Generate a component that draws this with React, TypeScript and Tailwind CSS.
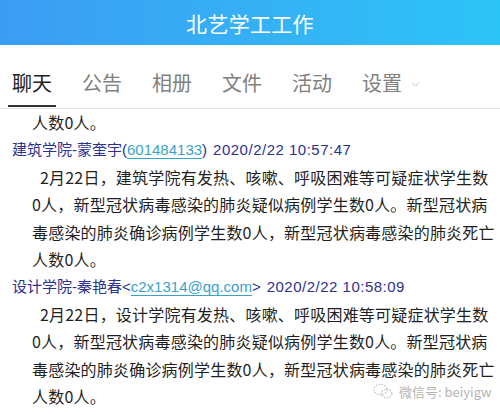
import React from "react";
import { ChevronDown } from "lucide-react";

const FONT = { fontFamily: '"Noto Sans CJK SC", "Noto Sans", sans-serif' };
const SENDER_FONT = { fontFamily: '"Liberation Sans", "Noto Sans CJK SC", sans-serif' };

function Sender({ name, open, link, close, time }: { name: string; open: string; link: string; close: string; time: string }) {
  return (
    <div className="h-[27.4px] leading-[27.4px] pl-[12px] text-[15px] whitespace-nowrap text-[#2c3190]" style={SENDER_FONT}>
      {name}
      {open}
      <span className="text-[#3aa2c8] underline underline-offset-[3px]">{link}</span>
      {close}
      <span className="ml-[6px] tracking-[0.5px]">{time}</span>
    </div>
  );
}

function Body({ lines }: { lines: string[] }) {
  return (
    <div className="text-[16px] tracking-[0.2px] text-[#1f1f1f]">
      {lines.map((l, i) => (
        <div key={i} className={`h-[27.4px] leading-[27.4px] whitespace-nowrap ${i === 0 ? "pl-[40px]" : "pl-[32px]"}`}>
          {l}
        </div>
      ))}
    </div>
  );
}

function WeChatIcon() {
  return (
    <svg width="20" height="17" viewBox="0 0 20 17" fill="none" stroke="#c4c4c4" strokeWidth="1.2" strokeDasharray="1.6 1.2">
      <ellipse cx="7.5" cy="6.5" rx="6.5" ry="5.2" />
      <ellipse cx="13.5" cy="10.5" rx="5.3" ry="4.3" />
    </svg>
  );
}

export default function App() {
  const tabs = ["聊天", "公告", "相册", "文件", "活动", "设置"];
  const body = [
    "2月22日，建筑学院有发热、咳嗽、呼吸困难等可疑症状学生数",
    "0人，新型冠状病毒感染的肺炎疑似病例学生数0人。新型冠状病",
    "毒感染的肺炎确诊病例学生数0人，新型冠状病毒感染的肺炎死亡",
    "人数0人。",
  ];
  const body2 = [
    "2月22日，设计学院有发热、咳嗽、呼吸困难等可疑症状学生数",
    "0人，新型冠状病毒感染的肺炎疑似病例学生数0人。新型冠状病",
    "毒感染的肺炎确诊病例学生数0人，新型冠状病毒感染的肺炎死亡",
    "人数0人。",
  ];
  return (
    <div className="w-[500px] h-[415px] bg-white overflow-hidden relative" style={FONT}>
      <div className="h-[45px] bg-gradient-to-r from-[#3b9cf3] to-[#2cc4f7] flex items-center justify-center pt-[3px]">
        <span className="text-white text-[21px] tracking-[0.3px]">北艺学工工作</span>
      </div>
      <div className="h-[64px] border-b border-[#e6e6e6] flex pl-[8px] gap-[22px] pt-[24px]">
        {tabs.map((t, i) => (
          <div
            key={t}
            className={`flex items-start px-[4px] h-[38px] text-[20px] leading-[28px] ${
              i === 0 ? "border-b-2 border-[#333] text-[#222]" : "text-[#808080]"
            }`}
          >
            {t}
            {i === 5 && <ChevronDown size={13} strokeWidth={1.5} className="ml-[7px] mt-[9px] text-[#b5b5b5]" />}
          </div>
        ))}
      </div>
      <div className="flex flex-col">
        <div className="h-[27.4px] leading-[27.4px] pl-[32px] text-[16px] tracking-[0.2px] text-[#1f1f1f]">人数0人。</div>
        <Sender name="建筑学院-蒙奎宇" open="(" link="601484133" close=")" time="2020/2/22 10:57:47" />
        <Body lines={body} />
        <Sender name="设计学院-秦艳春" open="<" link="c2x1314@qq.com" close=">" time="2020/2/22 10:58:09" />
        <Body lines={body2} />
      </div>
      <div className="absolute left-[373px] top-[382px] flex items-center gap-[6px] text-[13px] text-[#b3b3b3]">
        <WeChatIcon />
        <span>微信号: beiyigw</span>
      </div>
    </div>
  );
}
